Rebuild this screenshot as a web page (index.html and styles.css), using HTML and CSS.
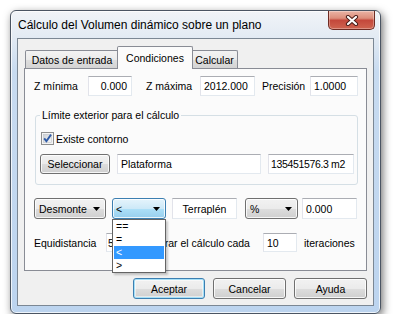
FILE: index.html
```html
<!DOCTYPE html>
<html lang="es">
<head>
    <meta charset="UTF-8">
    <title>Cálculo del Volumen dinámico sobre un plano</title>
    <link rel="stylesheet" href="styles.css">
</head>
<body>
    <div class="window">
        <div class="titlebar">
            <span class="title">Cálculo del Volumen dinámico sobre un plano</span>
            <div class="close">
                <svg width="14" height="11" viewBox="0 0 14 11">
                    <path d="M3 2 L11 9 M11 2 L3 9" stroke="#4a1d18" stroke-width="4.2" stroke-linecap="round"/>
                    <path d="M3 2 L11 9 M11 2 L3 9" stroke="#fff" stroke-width="2.2" stroke-linecap="round"/>
                </svg>
            </div>
        </div>

        <div class="client">
            <div class="tabs">
                <div class="tab tab-datos">Datos de entrada</div>
                <div class="tab tab-cond active">Condiciones</div>
                <div class="tab tab-calc">Calcular</div>
            </div>

            <div class="panel">
                <!-- cotas -->
                <div class="row row-z">
                    <span class="lbl lbl-zmin">Z mínima</span>
                    <div class="field w44 right">0.000</div>
                    <span class="lbl lbl-zmax">Z máxima</span>
                    <div class="field w55">2012.000</div>
                    <span class="lbl lbl-prec">Precisión</span>
                    <div class="field w48">1.0000</div>
                </div>

                <!-- limite exterior -->
                <div class="group">
                    <span class="group-title">Límite exterior para el cálculo</span>
                    <div class="check-row">
                        <svg class="checkbox" width="13" height="13" viewBox="0 0 13 13">
                            <defs>
                                <linearGradient id="cb" x1="0" y1="0" x2="1" y2="1">
                                    <stop offset="0" stop-color="#cdd1d7"/>
                                    <stop offset="1" stop-color="#f7f7f7"/>
                                </linearGradient>
                            </defs>
                            <rect x="0.5" y="0.5" width="12" height="12" fill="#f4f4f4" stroke="#8e8f8f"/>
                            <rect x="2.5" y="2.5" width="8" height="8" fill="url(#cb)" stroke="#c0c3c8" stroke-width="0.6"/>
                            <path d="M3.2 6.4 L5.4 9.2 L10 2.6" fill="none" stroke="#2f5ba6" stroke-width="1.9"/>
                        </svg>
                        <span class="check-label">Existe contorno</span>
                    </div>
                    <div class="sel-row">
                        <div class="btn btn-sel">Seleccionar</div>
                        <div class="field w144">Plataforma</div>
                        <div class="field w86 num">135451576.3 m2</div>
                    </div>
                </div>

                <!-- condiciones -->
                <div class="row row-combos">
                    <div class="combo w72">
                        <span>Desmonte</span>
                        <svg width="7" height="4" viewBox="0 0 7 4"><path d="M0 0 H7 L3.5 4 Z" fill="#000"/></svg>
                    </div>
                    <div class="combo combo-open w54">
                        <span>&lt;</span>
                        <svg width="7" height="4" viewBox="0 0 7 4"><path d="M0 0 H7 L3.5 4 Z" fill="#000"/></svg>
                        <ul class="dropdown">
                            <li>==</li>
                            <li>=</li>
                            <li class="selected">&lt;</li>
                            <li>&gt;</li>
                        </ul>
                    </div>
                    <div class="field center w65 terr">Terraplén</div>
                    <div class="combo w53 pct">
                        <span>%</span>
                        <svg width="7" height="4" viewBox="0 0 7 4"><path d="M0 0 H7 L3.5 4 Z" fill="#000"/></svg>
                    </div>
                    <div class="field w55 val">0.000</div>
                </div>

                <div class="row row-equi">
                    <span class="lbl lbl-equi">Equidistancia</span>
                    <div class="field w30 small">5</div>
                    <span class="lbl lbl-most">Mostrar el cálculo cada</span>
                    <div class="field w34">10</div>
                    <span class="lbl lbl-iter">iteraciones</span>
                </div>
            </div>

            <div class="buttons">
                <div class="btn btn-default w72">Aceptar</div>
                <div class="btn w73">Cancelar</div>
                <div class="btn w73">Ayuda</div>
            </div>
        </div>
    </div>
</body>
</html>
```

FILE: styles.css
```css
* {
    margin: 0;
    padding: 0;
    box-sizing: border-box;
}

body {
    background: #fff;
    font-family: "Liberation Sans", Arial, sans-serif;
    font-size: 10.5px;
    color: #000;
    padding: 10px 0 0 10px;
}

/* ventana */
.window {
    width: 371px;
    height: 304px;
    border: 1px solid #4b5563;
    border-radius: 6px;
    background: linear-gradient(to bottom, #f1f4f8 0px, #e2eaf3 27px, #c8dbf0 60px, #bcd4ef 100%);
    box-shadow: 2px 3px 9px rgba(0,0,0,0.55), inset 0 0 0 1px rgba(255,255,255,0.75);
    padding: 0 6px 7px 6px;
    display: flex;
    flex-direction: column;
}

.titlebar {
    height: 27px;
    display: flex;
    justify-content: space-between;
    align-items: flex-start;
}

.title {
    font-size: 12px;
    line-height: 28px;
    margin-left: 1px;
}

.close {
    width: 47px;
    height: 19px;
    margin-right: -1px;
    border: 1px solid #6e2b23;
    border-top: none;
    border-radius: 0 0 5px 5px;
    background: linear-gradient(to bottom, #eab4a5 0%, #dc8d7b 40%, #c4483b 52%, #cf6450 100%);
    box-shadow: inset 0 0 0 1px rgba(255,255,255,0.3);
    display: flex;
    align-items: center;
    justify-content: center;
}

.client {
    flex: 1;
    border: 1px solid #7b8794;
    background: #f0f0f0;
    padding: 7px 6px 0 6px;
    display: flex;
    flex-direction: column;
}

/* pestañas */
.tabs {
    display: flex;
    align-items: flex-end;
    height: 22px;
    padding-left: 1px;
}

.tab {
    height: 18px;
    border: 1px solid #898c95;
    border-bottom: none;
    border-radius: 2px 2px 0 0;
    background: linear-gradient(to bottom, #f3f3f3 0%, #ebebeb 50%, #dedede 51%, #d4d4d4 100%);
    display: flex;
    align-items: center;
    justify-content: center;
    white-space: nowrap;
}

.tab-datos { width: 94px; }
.tab-cond { width: 76px; }
.tab-calc { width: 47px; margin-left: -2px; }

.tab.active {
    height: 23px;
    margin: 0 0 -1px -2px;
    background: #fbfbfb;
    position: relative;
    z-index: 1;
}

.panel {
    height: 203px;
    border: 1px solid #898c95;
    background: #fbfbfb;
    padding: 7px 8px 0 9px;
}

.row {
    display: flex;
    align-items: center;
}

.row-z { height: 20px; }

.lbl { white-space: nowrap; }
.lbl-zmin { width: 54px; }
.lbl-zmax { width: 54px; margin-left: 14px; }
.lbl-prec { width: 48px; margin-left: 7px; }
.lbl-equi { width: 72px; }
.lbl-most { width: 121px; margin-left: 6px; }
.lbl-iter { margin-left: 7px; }

/* campos */
.field {
    height: 20px;
    background: #fff;
    border: 1px solid;
    border-color: #abadb3 #e3e9ef #e3e9ef #e2e3ea;
    padding: 0 3px;
    display: flex;
    align-items: center;
    white-space: nowrap;
    overflow: hidden;
}

.field.right { justify-content: flex-end; padding-right: 4px; }
.field.center { justify-content: center; }
.field.small { padding-left: 1px; }
.field.num { padding-left: 2px; letter-spacing: -0.35px; }

.w30 { width: 30px; }
.w34 { width: 34px; }
.w44 { width: 44px; }
.w48 { width: 48px; }
.w53 { width: 53px; }
.w54 { width: 54px; }
.w55 { width: 55px; }
.w65 { width: 65px; }
.w72 { width: 72px; }
.w73 { width: 73px; }
.w86 { width: 86px; margin-left: 7px; }
.w144 { width: 144px; margin-left: 7px; }

/* grupo */
.group {
    position: relative;
    margin: 19px 0 0 1px;
    width: 323px;
    height: 70px;
    border: 1px solid #d5dfe5;
    border-radius: 3px;
    padding: 16px 3px 0 4px;
}

.group-title {
    position: absolute;
    top: -7px;
    left: 4px;
    padding: 0 2px;
    line-height: 13px;
    background: #fbfbfb;
}

.check-row {
    display: flex;
    align-items: center;
    height: 13px;
}

.checkbox { margin-left: 1px; }
.check-label { margin-left: 2px; }

.sel-row {
    display: flex;
    align-items: center;
    margin-top: 9px;
    height: 20px;
}

/* botones */
.btn {
    height: 21px;
    border: 1px solid #707070;
    border-radius: 3px;
    background: linear-gradient(to bottom, #f2f2f2 0%, #ebebeb 50%, #dddddd 51%, #cfcfcf 100%);
    box-shadow: inset 0 0 0 1px rgba(255,255,255,0.8);
    display: flex;
    align-items: center;
    justify-content: center;
    white-space: nowrap;
}

.btn-sel { width: 70px; height: 20px; }

.btn-default {
    border-color: #3c7fb1;
    box-shadow: inset 0 0 0 1px #a6e0f8, inset 0 0 0 2px rgba(255,255,255,0.5);
}

.buttons {
    display: flex;
    justify-content: flex-end;
    gap: 8px;
    margin-top: 7px;
}

/* combos */
.row-combos {
    margin-top: 13px;
    height: 21px;
}

.combo {
    position: relative;
    height: 21px;
    border: 1px solid #707070;
    border-radius: 3px;
    background: linear-gradient(to bottom, #f2f2f2 0%, #ebebeb 50%, #dddddd 51%, #cfcfcf 100%);
    box-shadow: inset 0 0 0 1px rgba(255,255,255,0.8);
    display: flex;
    align-items: center;
    justify-content: space-between;
    padding: 0 5px 0 4px;
}

.combo-open {
    margin-left: 6px;
    border-color: #3c7fb1;
    background: linear-gradient(to bottom, #e5f4fc 0%, #cde9f8 50%, #ade0f8 51%, #97cfee 100%);
    padding-left: 3px;
}

.terr { margin-left: 6px; height: 21px; }
.pct { margin-left: 8px; }
.val { margin-left: 4px; height: 21px; }

.dropdown {
    position: absolute;
    top: calc(100% + 1px);
    left: -1px;
    width: 54px;
    list-style: none;
    background: #fff;
    border: 1px solid #646464;
    padding: 0 1px;
    box-shadow: 2px 2px 2px rgba(0,0,0,0.2);
    z-index: 2;
}

.dropdown li {
    height: 13px;
    line-height: 13px;
    padding-left: 2px;
}

.dropdown li.selected {
    background: #3399ff;
    color: #fff;
}

.row-equi {
    margin-top: 14px;
    height: 19px;
}

.row-equi .field { height: 19px; }
```
